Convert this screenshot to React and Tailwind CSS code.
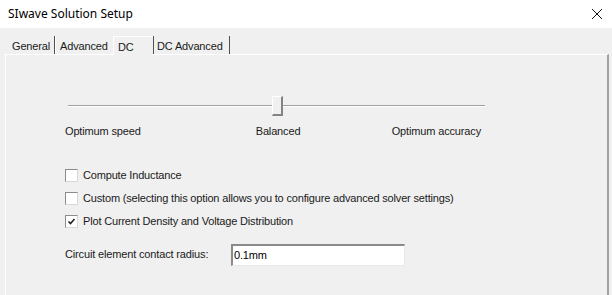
import React from "react";

const font = { fontFamily: '"Liberation Sans", Arial, sans-serif' };

function Checkbox({ checked, label }) {
  return (
    <div className="flex items-center h-[23px]">
      <div className="w-[13px] h-[13px] bg-white border border-t-[#8c8c8c] border-l-[#8c8c8c] border-r-[#d8d8d8] border-b-[#d8d8d8] flex items-center justify-center">
        {checked && (
          <svg width="9" height="9" viewBox="0 0 9 9">
            <path d="M1.5 4.5 L3.5 6.5 L7.5 2" fill="none" stroke="#222" strokeWidth="1.6" />
          </svg>
        )}
      </div>
      <span className="ml-[5px] text-[11px] tracking-[-0.17px] text-[#1a1a1a]">{label}</span>
    </div>
  );
}

export default function App() {
  return (
    <div className="w-[612px] h-[295px] overflow-hidden bg-[#f0f0f0]" style={font}>
      {/* Title bar */}
      <div className="h-[28px] bg-white flex items-center justify-between pl-[8px] pr-[9px]">
        <span className="text-[12px] text-black" style={{ fontFamily: '"Noto Sans", "Open Sans", sans-serif' }}>SIwave Solution Setup</span>
        <svg width="12" height="12" viewBox="0 0 12 12">
          <path d="M1 1 L11 11 M11 1 L1 11" stroke="#111" strokeWidth="1" />
        </svg>
      </div>

      {/* Tabs */}
      <div className="h-[26px] flex items-end pl-[5px] text-[11px] tracking-[-0.15px] text-[#1a1a1a]">
        <div className="h-[18px] flex items-center pt-[2px] pl-[7px] w-[50px] border-r border-r-[#505050]">General</div>
        <div className="h-[18px] flex items-center pt-[2px] pl-[4px] w-[58px] border-l border-l-white">Advanced</div>
        <div className="h-[19px] flex items-start pt-[2px] pl-[4px] w-[40px] border-t border-l border-t-white border-l-white bg-[#f0f0f0] relative -mb-px">DC</div>
        <div className="h-[18px] flex items-center pt-[2px] pl-[3px] w-[77px] border-r border-r-[#505050] border-l border-l-[#505050]">DC Advanced</div>
      </div>

      {/* Panel */}
      <div className="ml-[5px] w-[604px] h-[260px] border-t border-l border-t-white border-l-white border-r-2 border-r-[#a0a0a0] pl-[59px] pt-[41px]">
        {/* Slider */}
        <div className="relative w-[417px] h-[20px] ml-[3px]">
          <div className="absolute left-0 right-0 top-[9px] h-[2px] border-t border-t-[#a0a0a0] border-b border-b-white" />
          <div className="absolute left-[204px] top-0 w-[11px] h-[20px] bg-[#f0f0f0] border-t border-l border-t-white border-l-white border-r-2 border-b-2 border-r-[#838383] border-b-[#838383]" />
        </div>
        {/* Labels */}
        <div className="flex w-[416px] mt-[7px] text-[11px] tracking-[-0.15px] text-[#1a1a1a]">
          <span>Optimum speed</span>
          <span className="ml-[115px]">Balanced</span>
          <span className="ml-auto">Optimum accuracy</span>
        </div>
        {/* Checkboxes */}
        <div className="mt-[24px]">
          <Checkbox label="Compute Inductance" />
          <Checkbox label="Custom (selecting this option allows you to configure advanced solver settings)" />
          <Checkbox checked label="Plot Current Density and Voltage Distribution" />
        </div>
        {/* Input row */}
        <div className="flex items-center mt-[11px]">
          <span className="text-[11px] tracking-[-0.15px] text-[#1a1a1a] w-[166px]">Circuit element contact radius:</span>
          <div className="w-[174px] h-[22px] bg-white border-t-2 border-l-2 border-t-[#8a8a8a] border-l-[#8a8a8a] border-r border-b border-r-[#e8e8e8] border-b-[#e8e8e8] flex items-center pl-[1px] text-[11px] tracking-[-0.15px] text-black">
            0.1mm
          </div>
        </div>
      </div>
    </div>
  );
}
